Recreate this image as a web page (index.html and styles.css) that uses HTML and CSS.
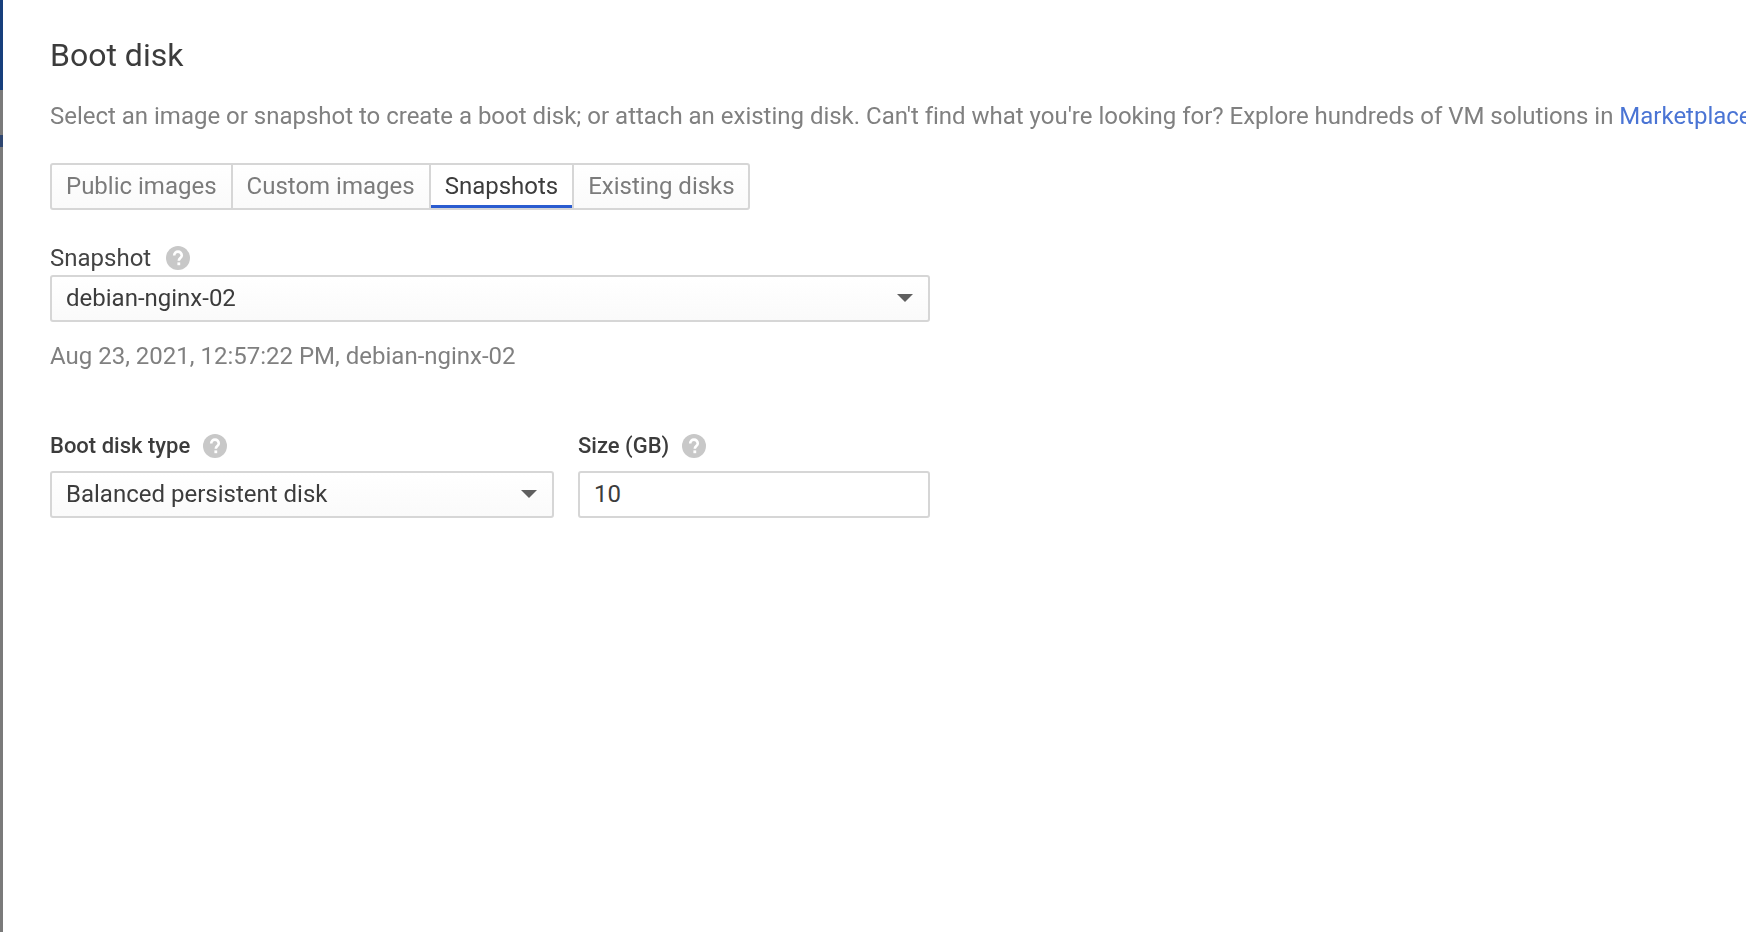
FILE: index.html
```html
<!DOCTYPE html>
<html lang="en">
<head>
<meta charset="utf-8">
<title>Boot disk</title>
<link rel="stylesheet" href="styles.css">
</head>
<body>
<div class="edge"><div class="edge-blue"></div><div class="edge-gray"></div></div>
<main class="panel">
  <h1 class="title">Boot disk</h1>
  <p class="intro">Select an image or snapshot to create a boot disk; or attach an existing disk. Can't find what you're looking for? Explore hundreds of VM solutions in <a class="link" href="#">Marketplace</a></p>
  <div class="tabs">
    <div class="tab">Public images</div>
    <div class="tab">Custom images</div>
    <div class="tab active">Snapshots</div>
    <div class="tab">Existing disks</div>
  </div>
  <div class="label-row snapshot-label">
    <span>Snapshot</span>
    <svg class="help" viewBox="0 0 24 24"><circle cx="12" cy="12" r="12" fill="#c8c8c8"/><path d="M8.2 9.4a3.8 3.8 0 0 1 7.6 0c0 2.6-3 2.700-3 5.300" fill="none" stroke="#fff" stroke-width="2.600"/><rect x="11.400" y="16.400" width="2.800" height="2.800" fill="#fff"/></svg>
  </div>
  <div class="field select wide">
    <span>debian-nginx-02</span>
    <svg class="caret" viewBox="0 0 16 8"><path d="M0 0h16L8 8z" fill="#5f5f5f"/></svg>
  </div>
  <div class="meta">Aug 23, 2021, 12:57:22 PM, debian-nginx-02</div>
  <div class="pair">
    <div class="col col-type">
      <div class="label-row small">
        <span>Boot disk type</span>
        <svg class="help" viewBox="0 0 24 24"><circle cx="12" cy="12" r="12" fill="#c8c8c8"/><path d="M8.2 9.4a3.8 3.8 0 0 1 7.6 0c0 2.6-3 2.700-3 5.300" fill="none" stroke="#fff" stroke-width="2.600"/><rect x="11.400" y="16.400" width="2.800" height="2.800" fill="#fff"/></svg>
      </div>
      <div class="field select">
        <span>Balanced persistent disk</span>
        <svg class="caret" viewBox="0 0 16 8"><path d="M0 0h16L8 8z" fill="#5f5f5f"/></svg>
      </div>
    </div>
    <div class="col col-size">
      <div class="label-row small">
        <span>Size (GB)</span>
        <svg class="help" viewBox="0 0 24 24"><circle cx="12" cy="12" r="12" fill="#c8c8c8"/><path d="M8.2 9.4a3.8 3.8 0 0 1 7.6 0c0 2.6-3 2.700-3 5.300" fill="none" stroke="#fff" stroke-width="2.600"/><rect x="11.400" y="16.400" width="2.800" height="2.800" fill="#fff"/></svg>
      </div>
      <div class="field input"><span>10</span></div>
    </div>
  </div>
</main>
</body>
</html>
```
FILE: styles.css
```css
html, body { margin: 0; height: 100%; background: #fff; overflow: hidden; }
body { display: flex; font-family: Roboto, "Liberation Sans", sans-serif; color: #333; }
.edge { width: 3px; flex: none; display: flex; flex-direction: column; }
.edge-blue { height: 90px; background: #173f7c; }
.edge-gray { flex: 1; background: linear-gradient(#7a7a7a 45px, #2f4670 45px, #2f4670 57px, #7a7a7a 57px); }
.panel { flex: 1; min-width: 0; padding: 36px 0 0 47px; filter: blur(0.6px); }
.title { margin: 0; font-size: 32px; font-weight: 400; line-height: 38px; color: #3c3c3c; }
.intro { margin: 27px 0 0; font-size: 24px; line-height: 30px; letter-spacing: -0.012px; color: #808080; white-space: nowrap; }
.link { color: #4a74d4; text-decoration: none; }
.tabs { display: inline-flex; margin-top: 32px; height: 47px; box-sizing: border-box; border: 2px solid #d6d6d6; border-radius: 3px; background: linear-gradient(#fff, #fafafa); }
.tab { padding: 0 14px; font-size: 24px; line-height: 43px; color: #7b7b7b; border-right: 2px solid #d6d6d6; }
.tab:last-child { border-right: 0; padding-right: 13px; }
.tab.active { color: #3c3c3c; background: #fff; box-shadow: inset 0 -3px 0 #2a5cd0; }
.label-row { display: flex; align-items: center; gap: 15px; font-size: 24px; line-height: 30px; color: #444; }
.snapshot-label { margin-top: 33px; margin-bottom: 2px; height: 30px; }
.label-row.small { font-size: 22px; height: 30px; gap: 13px; font-weight: 500; color: #3c3c3c; }
.help { width: 24px; height: 24px; flex: none; }
.field { box-sizing: border-box; height: 47px; border: 2px solid #d6d6d6; border-radius: 3px; display: flex; align-items: center; justify-content: space-between; padding: 0 14px 2px; font-size: 24px; color: #3c3c3c; }
.select { background: linear-gradient(#fff, #fafafa); }
.input { background: #fff; }
.wide { width: 880px; }
.caret { width: 16px; height: 8px; flex: none; margin-right: 1px; }
.meta { margin-top: 19px; font-size: 24px; line-height: 30px; color: #808080; }
.pair { display: flex; gap: 24px; margin-top: 60px; }
.col { display: flex; flex-direction: column; gap: 10px; }
.col-type { width: 504px; }
.col-size { width: 352px; }
```
